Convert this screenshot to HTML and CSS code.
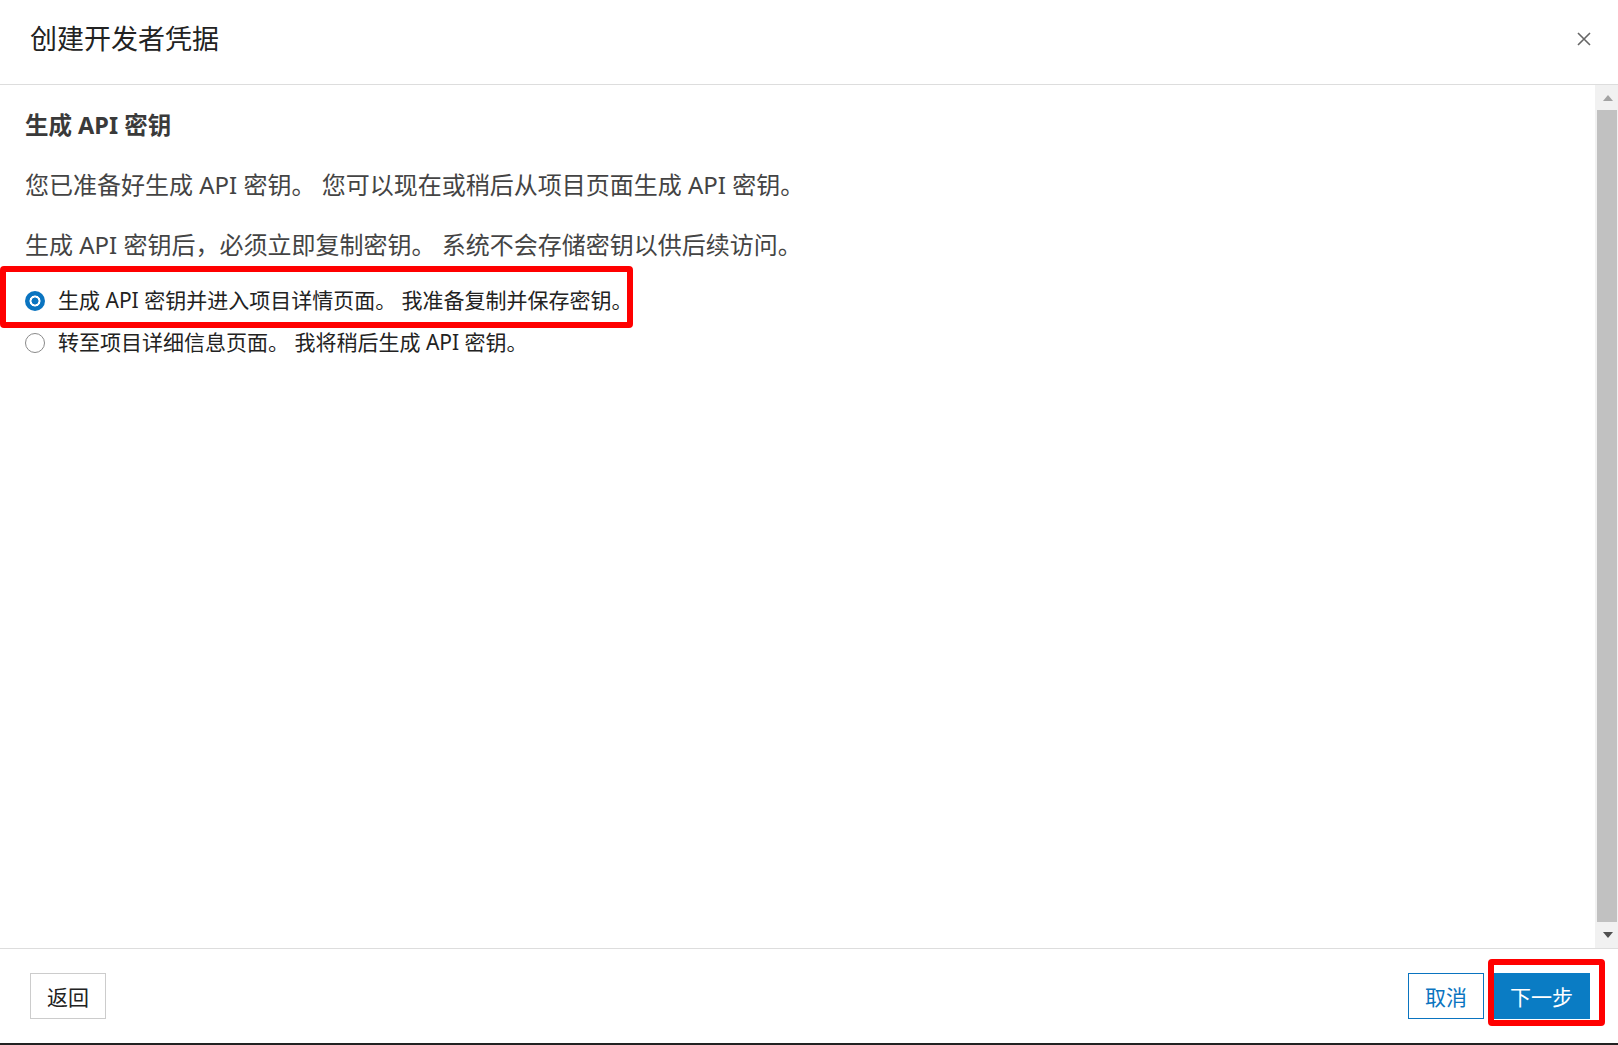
FILE: index.html
```html
<!DOCTYPE html>
<html lang="zh-CN">
<head>
	<meta charset="UTF-8">
	<title>创建开发者凭据</title>
	<link rel="stylesheet" href="styles.css">
</head>
<body>
	<div class="dialog">
		<div class="head">
			<h1>创建开发者凭据</h1>
			<a class="close" href="javascript:;">
				<svg width="14" height="14" viewBox="0 0 14 14"><path d="M1 1L13 13M13 1L1 13" stroke="#666" stroke-width="1.6" fill="none"/></svg>
			</a>
		</div>
		<div class="main">
			<div class="content">
				<h2>生成 API 密钥</h2>
				<p class="p1">您已准备好生成 API 密钥。 您可以现在或稍后从项目页面生成 API 密钥。</p>
				<p class="p2">生成 API 密钥后，必须立即复制密钥。 系统不会存储密钥以供后续访问。</p>
				<div class="options">
					<label class="opt"><span class="radio on"></span>生成 API 密钥并进入项目详情页面。 我准备复制并保存密钥。</label>
					<label class="opt"><span class="radio"></span>转至项目详细信息页面。 我将稍后生成 API 密钥。</label>
				</div>
			</div>
			<div class="scrollbar">
				<div class="arrow up"></div>
				<div class="thumb"></div>
				<div class="arrow down"></div>
			</div>
		</div>
		<div class="foot">
			<a class="btn" href="javascript:;">返回</a>
			<div class="right">
				<a class="btn blue-line" href="javascript:;">取消</a>
				<a class="btn blue" href="javascript:;">下一步</a>
			</div>
		</div>
	</div>
	<!-- 红色标注框 -->
	<div class="mark mark1"></div>
	<div class="mark mark2"></div>
</body>
</html>
```
FILE: styles.css
```css
*{
	margin:0;
	padding:0;
	box-sizing:border-box;
}
body{
	width:1618px;
	height:1045px;
	overflow:hidden;
	position:relative;
	background:#fff;
	font-family:"Noto Sans","Noto Sans CJK SC",sans-serif;
	color:#222;
}
.dialog{
	height:1045px;
	display:flex;
	flex-direction:column;
	border-bottom:2px solid #222;
}
.head{
	height:85px;
	flex:none;
	border-bottom:1px solid #ddd;
	display:flex;
	justify-content:space-between;
	align-items:flex-start;
	padding:0 27px 0 30px;
}
.head h1{
	font-size:27px;
	font-weight:normal;
	line-height:78px;
	color:#222;
}
.close{
	display:block;
	width:14px;
	height:14px;
	margin-top:32px;
}
.close svg{
	display:block;
}
.main{
	height:863px;
	flex:none;
	display:flex;
}
.content{
	flex:1;
	padding:24px 0 0 25px;
}
.content h2{
	font-size:23.5px;
	font-weight:bold;
	line-height:32px;
	color:#3a3a3a;
}
.content p{
	font-size:24px;
	line-height:32px;
	color:#444;
}
.p1{
	margin-top:28px;
}
.p2{
	margin-top:28px;
}
.options{
	margin-top:17px;
}
.opt{
	display:flex;
	align-items:center;
	height:42px;
	font-size:21px;
	color:#222;
}
.radio{
	width:20px;
	height:20px;
	border-radius:50%;
	border:1.5px solid #8a8a8a;
	margin:3px 13px 0 0;
	background:#fff;
}
.radio.on{
	border:none;
	background:radial-gradient(circle,#0a74c0 0 3.2px,#fff 3.8px 5.2px,#0a74c0 5.8px);
}
.scrollbar{
	width:23px;
	background:#f1f1f1;
	display:flex;
	flex-direction:column;
}
.arrow{
	height:25px;
	display:flex;
	align-items:center;
	justify-content:center;
}
.arrow::after{
	content:"";
	border-left:5.5px solid transparent;
	border-right:5.5px solid transparent;
}
.arrow.up::after{
	border-bottom:6px solid #a3a3a3;
	margin-left:2px;
}
.arrow.down{
	height:26px;
}
.arrow.down::after{
	border-top:6px solid #505050;
	margin-left:2px;
}
.thumb{
	flex:1;
	background:#c1c1c1;
	margin:0 1px 0 2px;
}
.foot{
	flex:1;
	border-top:1px solid #ddd;
	display:flex;
	justify-content:space-between;
	align-items:center;
	padding:0 28px 0 30px;
}
.right{
	display:flex;
	gap:9px;
}
.btn{
	display:flex;
	align-items:center;
	height:46px;
	padding:0 16px;
	border:1px solid #ccc;
	font-size:21px;
	color:#222;
	text-decoration:none;
}
.blue-line{
	border-color:#0a74c0;
	color:#0a74c0;
}
.blue{
	border-color:#0a7cc4;
	background:#0a7cc4;
	color:#fff;
}
.mark{
	position:absolute;
	border:6px solid #f00;
	border-radius:4px;
}
.mark1{
	left:0;
	top:266px;
	width:633px;
	height:62px;
}
.mark2{
	left:1488px;
	top:959px;
	width:117px;
	height:67px;
}
```
